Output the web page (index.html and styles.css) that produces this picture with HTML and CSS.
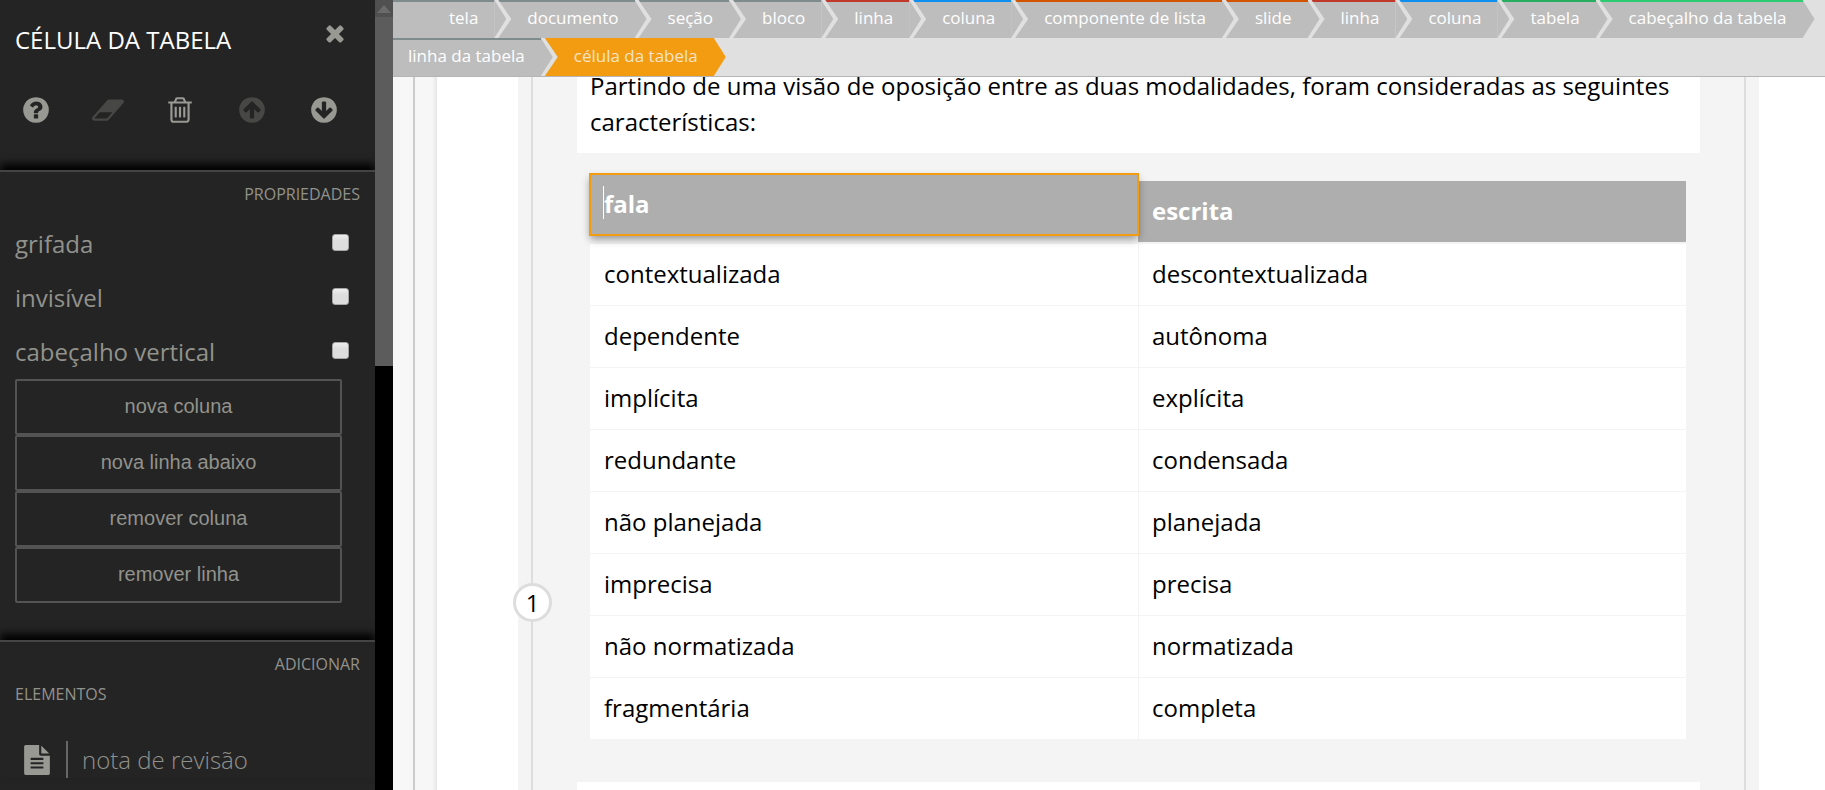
FILE: index.html
```html
<!DOCTYPE html>
<html lang="pt-br">
<head>
  <title>Editor - célula da tabela</title>
  <meta charset="UTF-8">
  <link rel="stylesheet" href="styles.css">
</head>
<body>

<div class="editor">

  <aside class="sidebar">
    <div class="panel">

      <div class="panel-head">
        <h1>CÉLULA DA TABELA</h1>
        <button type="button" class="icon-btn close" aria-label="fechar">
          <svg viewBox="0 0 1792 1792"><path d="M1490 1322q0 40-28 68l-136 136q-28 28-68 28t-68-28l-294-294-294 294q-28 28-68 28t-68-28l-136-136q-28-28-28-68t28-68l294-294-294-294q-28-28-28-68t28-68l136-136q28-28 68-28t68 28l294 294 294-294q28-28 68-28t68 28l136 136q28 28 28 68t-28 68l-294 294 294 294q28 28 28 68z"/></svg>
        </button>
      </div>

      <div class="toolbar">
        <button type="button" class="icon-btn" aria-label="ajuda">
          <svg viewBox="0 0 1792 1792"><path d="M1024 1376v-192q0-14-9-23t-23-9h-192q-14 0-23 9t-9 23v192q0 14 9 23t23 9h192q14 0 23-9t9-23zm256-672q0-88-55.5-163t-138.5-116-170-41q-243 0-371 213-15 24 8 42l132 100q7 6 19 6 16 0 25-12 53-68 86-92 34-24 86-24 48 0 85.5 26t37.5 59q0 38-20 61t-68 45q-63 28-115.5 86.5t-52.5 125.5v36q0 14 9 23t23 9h192q14 0 23-9t9-23q0-19 21.5-49.5t54.5-49.5q32-18 49-28.5t46-35 44.5-48 28-60.5 12.5-81zm384 192q0 209-103 385.5t-279.5 279.5-385.5 103-385.5-103-279.5-279.5-103-385.5 103-385.5 279.5-279.5 385.5-103 385.5 103 279.5 279.5 103 385.5z"/></svg>
        </button>
        <button type="button" class="icon-btn" aria-label="limpar" disabled>
          <svg class="wide" viewBox="0 0 2048 1792"><path d="M960 1408l336-384h-768l-336 384h768zm1013-1077q15 34 9.5 71.5t-30.5 65.5l-896 1024q-38 44-96 44h-768q-38 0-69.5-20.5t-47.5-54.5q-15-34-9.5-71.5t30.5-65.5l896-1024q38-44 96-44h768q38 0 69.5 20.5t47.5 54.5z"/></svg>
        </button>
        <button type="button" class="icon-btn" aria-label="remover">
          <svg viewBox="0 0 1792 1792"><path d="M704 736v576q0 14-9 23t-23 9h-64q-14 0-23-9t-9-23v-576q0-14 9-23t23-9h64q14 0 23 9t9 23zm256 0v576q0 14-9 23t-23 9h-64q-14 0-23-9t-9-23v-576q0-14 9-23t23-9h64q14 0 23 9t9 23zm256 0v576q0 14-9 23t-23 9h-64q-14 0-23-9t-9-23v-576q0-14 9-23t23-9h64q14 0 23 9t9 23zm128 724v-948h-896v948q0 22 7 40.5t14.5 27 10.5 8.5h832q3 0 10.5-8.5t14.5-27 7-40.5zm-672-1076h448l-48-117q-7-9-17-11h-317q-10 2-17 11zm928 32v64q0 14-9 23t-23 9h-96v948q0 83-47 143.5t-113 60.5h-832q-66 0-113-58.5t-47-141.5v-952h-96q-14 0-23-9t-9-23v-64q0-14 9-23t23-9h309l70-167q15-37 54-63t79-26h320q40 0 79 26t54 63l70 167h309q14 0 23 9t9 23z"/></svg>
        </button>
        <button type="button" class="icon-btn" aria-label="mover para cima" disabled>
          <svg viewBox="0 0 1792 1792"><path d="M1412 895q0-27-18-45l-362-362-91-91q-18-18-45-18t-45 18l-91 91-362 362q-18 18-18 45t18 45l91 91q18 18 45 18t45-18l189-189v502q0 26 19 45t45 19h128q26 0 45-19t19-45v-502l189 189q19 19 45 19t45-19l91-91q18-18 18-45zm252 1q0 209-103 385.5t-279.5 279.5-385.5 103-385.5-103-279.5-279.5-103-385.5 103-385.5 279.5-279.5 385.5-103 385.5 103 279.5 279.5 103 385.5z"/></svg>
        </button>
        <button type="button" class="icon-btn" aria-label="mover para baixo">
          <svg class="flip" viewBox="0 0 1792 1792"><path d="M1412 895q0-27-18-45l-362-362-91-91q-18-18-45-18t-45 18l-91 91-362 362q-18 18-18 45t18 45l91 91q18 18 45 18t45-18l189-189v502q0 26 19 45t45 19h128q26 0 45-19t19-45v-502l189 189q19 19 45 19t45-19l91-91q18-18 18-45zm252 1q0 209-103 385.5t-279.5 279.5-385.5 103-385.5-103-279.5-279.5-103-385.5 103-385.5 279.5-279.5 385.5-103 385.5 103 279.5 279.5 103 385.5z"/></svg>
        </button>
      </div>

      <section class="section props">
        <h2>PROPRIEDADES</h2>
        <div class="prop">
          <label for="grifada">grifada</label>
          <input type="checkbox" id="grifada">
        </div>
        <div class="prop">
          <label for="invisivel">invisível</label>
          <input type="checkbox" id="invisivel">
        </div>
        <div class="prop">
          <label for="cabecalhoVertical">cabeçalho vertical</label>
          <input type="checkbox" id="cabecalhoVertical">
        </div>
        <div class="actions">
          <button type="button" class="btn">nova coluna</button>
          <button type="button" class="btn">nova linha abaixo</button>
          <button type="button" class="btn">remover coluna</button>
          <button type="button" class="btn">remover linha</button>
        </div>
      </section>

      <section class="section">
        <h2>ADICIONAR</h2>
        <h3>ELEMENTOS</h3>
        <a href="#" class="element">
          <svg viewBox="0 0 1792 1792"><path d="M1596 476q14 14 28 36h-472v-472q22 14 36 28zm-476 164h544v1056q0 40-28 68t-68 28h-1344q-40 0-68-28t-28-68v-1600q0-40 28-68t68-28h800v544q0 40 28 68t68 28zm160 736v-64q0-14-9-23t-23-9h-704q-14 0-23 9t-9 23v64q0 14 9 23t23 9h704q14 0 23-9t9-23zm0-256v-64q0-14-9-23t-23-9h-704q-14 0-23 9t-9 23v64q0 14 9 23t23 9h704q14 0 23-9t9-23zm0-256v-64q0-14-9-23t-23-9h-704q-14 0-23 9t-9 23v64q0 14 9 23t23 9h704q14 0 23-9t9-23z"/></svg>
          <span>nota de revisão</span>
        </a>
      </section>
    </div>

    <div class="scrollbar">
      <div class="scroll-up"></div>
      <div class="scroll-thumb"></div>
    </div>
  </aside>

  <main class="main">
    <nav class="breadcrumb">
      <ol>
        <li><a href="#">tela</a></li>
        <li><a href="#">documento</a></li>
        <li><a href="#">seção</a></li>
        <li><a href="#">bloco</a></li>
        <li class="linha"><a href="#">linha</a></li>
        <li class="coluna"><a href="#">coluna</a></li>
        <li class="componente"><a href="#">componente de lista</a></li>
        <li class="componente"><a href="#">slide</a></li>
        <li class="linha"><a href="#">linha</a></li>
        <li class="coluna"><a href="#">coluna</a></li>
        <li class="tabela"><a href="#">tabela</a></li>
        <li class="cabecalho"><a href="#">cabeçalho da tabela</a></li>
        <li><a href="#">linha da tabela</a></li>
        <li class="active"><a href="#">célula da tabela</a></li>
      </ol>
    </nav>

    <div class="stage">
      <div class="page">
        <div class="block">
          <div class="slide">
            <span class="number">1</span>
            <p class="card">Partindo de uma visão de oposição entre as duas modalidades, foram consideradas as seguintes características:</p>

            <table class="table">
              <thead>
                <tr><th class="selected">fala</th><th>escrita</th></tr>
              </thead>
              <tbody>
                <tr><td>contextualizada</td><td>descontextualizada</td></tr>
                <tr><td>dependente</td><td>autônoma</td></tr>
                <tr><td>implícita</td><td>explícita</td></tr>
                <tr><td>redundante</td><td>condensada</td></tr>
                <tr><td>não planejada</td><td>planejada</td></tr>
                <tr><td>imprecisa</td><td>precisa</td></tr>
                <tr><td>não normatizada</td><td>normatizada</td></tr>
                <tr><td>fragmentária</td><td>completa</td></tr>
              </tbody>
            </table>

            <div class="card next"></div>
          </div>
        </div>
      </div>
    </div>
  </main>

</div>

</body>
</html>
```
FILE: styles.css
```css
body {
  margin: 0;
  font-family: "Open Sans", sans-serif;
  background-color: #f7f7f7;
}

.editor {
  display: flex;
  height: 100vh;
  overflow: hidden;
}

/* barra lateral */
.sidebar {
  display: flex;
  flex: none;
  width: 393px;
  background-color: #000;
}

.panel {
  flex: 1;
  overflow: hidden;
  background-color: #242424;
  color: #92928c;
}

.panel-head {
  display: flex;
  justify-content: space-between;
  align-items: flex-start;
  padding: 20px 27px 0 15px;
}

h1 {
  margin: 0;
  font-size: 24px;
  line-height: 40px;
  font-weight: normal;
  color: #fff;
}

.icon-btn {
  display: flex;
  justify-content: center;
  padding: 0;
  border: none;
  background: none;
  color: #999993;
  cursor: pointer;
}

.icon-btn:disabled {
  color: #474745;
}

.icon-btn svg {
  width: 30px;
  height: 30px;
  fill: currentColor;
}

.icon-btn .wide {
  width: 34px;
}

.icon-btn .flip {
  transform: rotate(180deg);
}

.close svg {
  width: 26px;
  height: 26px;
}

.toolbar {
  display: flex;
  padding: 35px 15px 45px 0;
}

.toolbar .icon-btn {
  flex: 1;
}

.section {
  border-top: 2px solid #444;
  box-shadow: 0 -6px 8px #000;
  padding: 0 15px;
}

.props {
  padding-bottom: 37px;
}

h2, h3 {
  margin: 0;
  font-size: 16px;
  line-height: 30px;
  font-weight: normal;
}

h2 {
  padding-top: 7px;
  text-align: right;
}

.props h2 {
  padding-bottom: 8px;
}

.prop {
  display: flex;
  justify-content: space-between;
  align-items: center;
  height: 54px;
  padding-right: 11px;
  font-size: 24px;
}

.prop label {
  padding-bottom: 2px;
}

.prop input {
  appearance: none;
  width: 17px;
  height: 17px;
  margin: 0 0 4px;
  border: 1px solid #a5a5a5;
  border-radius: 3px;
  background: linear-gradient(#eee, #ddd 40%);
}

.actions {
  display: flex;
  flex-direction: column;
  padding-right: 18px;
}

.btn {
  height: 56px;
  padding: 0 10px 2px;
  border: 2px solid #535353;
  border-radius: 2px;
  background: none;
  color: #92928c;
  font-family: "Liberation Sans", Arial, sans-serif;
  font-size: 20px;
  cursor: pointer;
}

.element {
  display: flex;
  align-items: center;
  margin-top: 32px;
  padding-left: 7px;
  color: #92928c;
  font-size: 24px;
  font-weight: 300;
  text-decoration: none;
}

.element svg {
  width: 30px;
  height: 30px;
  margin-right: 14px;
  fill: #999993;
}

.element span {
  padding-left: 14px;
  border-left: 2px solid #666;
  line-height: 37px;
}

.scrollbar {
  width: 18px;
}

.scroll-up {
  display: flex;
  justify-content: center;
  align-items: center;
  height: 17px;
  background-color: #505050;
}

.scroll-up::before {
  content: "";
  border: 7px solid transparent;
  border-top: none;
  border-bottom: 8px solid #6b6b6b;
}

.scroll-thumb {
  height: 349px;
  background-color: #5c5c5c;
}

/* caminho do elemento selecionado */
.main {
  flex: 1;
  min-width: 0;
}

.breadcrumb {
  position: relative;
  z-index: 2;
  overflow: hidden;
  background-color: #e0e0e0;
  border-bottom: 1px solid #b5b5b5;
}

.breadcrumb ol {
  display: flex;
  flex-wrap: wrap;
  margin: 0 0 0 -18px;
  padding: 0;
  list-style: none;
}

.breadcrumb li {
  position: relative;
  height: 38px;
  padding: 0 16px 0 33px;
  box-sizing: border-box;
  border-top: 2px solid #7f8c8d;
  background-color: #bdbdbd;
}

.breadcrumb li:first-child {
  padding-left: 74px;
}

.breadcrumb li::before,
.breadcrumb li::after {
  content: "";
  position: absolute;
  z-index: 1;
  top: -2px;
  left: 100%;
  width: 17px;
  height: 38px;
  background-color: #e0e0e0;
  clip-path: polygon(0 0, 4px 0, 100% 50%, 4px 100%, 0 100%);
}

.breadcrumb li::after {
  width: 12px;
  background-color: #bdbdbd;
  clip-path: polygon(0 0, 100% 50%, 0 100%);
}

.breadcrumb li.linha { border-color: #c0392b; }
.breadcrumb li.coluna { border-color: #0e8eee; }
.breadcrumb li.componente { border-color: #d35400; }
.breadcrumb li.tabela { border-color: #27ae60; }
.breadcrumb li.cabecalho { border-color: #2ecc71; }

.breadcrumb li.active {
  border-color: #f39c12;
  background-color: #f39c12;
}

.breadcrumb li.active::after {
  background-color: #f39c12;
}

.breadcrumb a {
  color: #fff;
  font-size: 17px;
  line-height: 32px;
  text-decoration: none;
}

.breadcrumb .active a {
  color: #f3e3c8;
}

/* documento */
.stage {
  margin: -9px 0 0 20px;
  padding-left: 22px;
  border-left: 2px solid #ccc;
}

.page {
  padding: 0 66px 0 81px;
  background-color: #fff;
  box-shadow: 0 0 6px rgba(0, 0, 0, 0.15);
}

.block {
  padding: 0 13px;
  background-color: #f4f4f4;
}

.slide {
  position: relative;
  padding: 0 44px;
  border-left: 2px solid #ddd;
  border-right: 2px solid #ddd;
  font-size: 24px;
  line-height: 36px;
  color: #000;
}

.number {
  position: absolute;
  top: 515px;
  left: -20px;
  width: 33px;
  border: 3px solid #ddd;
  border-radius: 50%;
  background-color: #fff;
  line-height: 33px;
  text-align: center;
}

.card {
  margin: 0;
  padding: 0 13px 13px;
  background-color: #fff;
}

.table {
  width: calc(100% - 27px);
  margin: 28px 13px 43px;
  table-layout: fixed;
  border-spacing: 0;
}

th, td {
  box-sizing: border-box;
  height: 62px;
  padding: 0 14px 2px;
  text-align: left;
}

th {
  height: 61px;
  background-color: #aeaeae;
  color: #fff;
}

td {
  border-bottom: 1px solid #f4f4f4;
  background-color: #fff;
}

td + td {
  padding-left: 13px;
  border-left: 1px solid #f4f4f4;
}

tbody tr:first-child td {
  height: 64px;
  border-top: 2px solid #f4f4f4;
}

tbody tr:last-child td {
  height: 61px;
  border-bottom: none;
}

.selected {
  position: relative;
  top: -7px;
  outline: 2px solid #f39c12;
  outline-offset: -1px;
  box-shadow: 0 4px 8px rgba(0, 0, 0, 0.4);
}

/* cursor de texto */
.selected::before {
  content: "";
  position: absolute;
  top: 12px;
  left: 13px;
  height: 33px;
  border-left: 1px solid #fff;
}

.next {
  height: 200px;
}
```
